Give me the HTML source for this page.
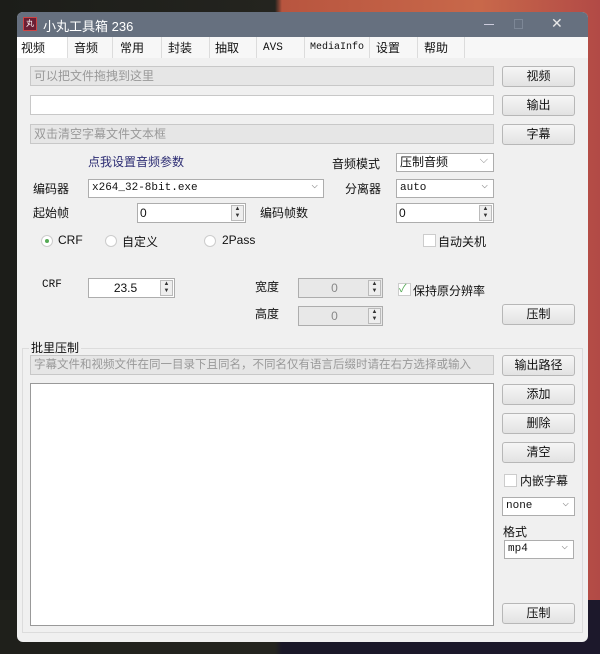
<!DOCTYPE html>
<html><head><meta charset="utf-8"><style>
*{margin:0;padding:0;box-sizing:border-box}
body{width:600px;height:654px;overflow:hidden;position:relative;font-family:"Liberation Sans","Noto Sans CJK SC",sans-serif;font-size:12px;color:#111;
background:linear-gradient(90deg,#1c1d19 0,#24241f 275px,#b8553f 282px,#c8684a 480px,#b24a46 600px)}
.bot{position:absolute;left:0;top:600px;width:600px;height:54px;background:linear-gradient(90deg,#1f201b 0,#24241f 275px,#1a1828 282px,#1c182b 600px)}
.win{position:absolute;left:17px;top:12px;width:571px;height:630px;background:#f0f0f0;border-radius:6px;overflow:hidden}
.title{position:absolute;left:0;top:0;width:571px;height:25px;background:#66707f;color:#fff;font-size:13px}
.a{position:absolute;white-space:nowrap}
.tabs{position:absolute;left:0;top:25px;width:571px;height:21px;background:#f7f7f7}
.tab{position:absolute;top:0;height:21px;border-right:1px solid #dcdcdc;font-size:12px;line-height:22px;padding-left:4px}
.in{position:absolute;border:1px solid #c8c8c8;background:#fff;height:20px;line-height:18px;padding-left:3px;color:#999;font-size:12px}
.gray{background:#e6e6e6}
.btn{position:absolute;width:73px;height:21px;border:1px solid #b7b7b7;border-radius:3px;background:linear-gradient(#f6f6f6,#e2e2e2);text-align:center;line-height:19px;font-size:12px}
.cb{position:absolute;height:19px;border:1px solid #adadad;background:#fff;font-family:"Liberation Mono",monospace;font-size:11px;line-height:17px;padding-left:3px}
.cb:after{content:"⌵";position:absolute;right:5px;top:-2px;color:#888;font-size:11px}
.sp{position:absolute;height:20px;border:1px solid #adadad;background:#fff;font-size:12px;line-height:18px;padding-left:2px}
.sp i{position:absolute;right:1px;top:1px;width:13px;height:16px;border:1px solid #bbb;background:#eee;font-style:normal;font-size:6px;line-height:7px;text-align:center;color:#333}
.dis{background:#e8e8e8;color:#888;text-align:center}
.rd{position:absolute;width:12px;height:12px;border:1px solid #ccc;border-radius:50%;background:#fff}
.ck{position:absolute;width:13px;height:13px;border:1px solid #ccc;background:#fff}
</style></head><body>
<div class="bot"></div>
<div class="win">
 <div class="title">
  <div class="a" style="left:6px;top:5px;width:14px;height:14px;background:#6b1f34;border:1px solid #c44;font-size:8px;text-align:center;line-height:12px">丸</div>
  <div class="a" style="left:26px;top:4px">小丸工具箱 236</div>
  <div class="a" style="left:467px;top:12px;width:10px;height:1px;background:#ccd"></div>
  <div class="a" style="left:497px;top:7px;width:9px;height:10px;border:1px solid #7d8796"></div>
  <div class="a" style="left:534px;top:3px;font-size:14px;color:#e8e8e8">✕</div>
 </div>
 <div class="tabs">
  <div class="tab" style="left:0;width:51px;background:#fff;border-right:1px solid #ddd">视频</div>
  <div class="tab" style="left:51px;width:45px;padding-left:6px">音频</div>
  <div class="tab" style="left:96px;width:49px;padding-left:7px">常用</div>
  <div class="tab" style="left:145px;width:48px;padding-left:6px">封装</div>
  <div class="tab" style="left:193px;width:47px;padding-left:5px">抽取</div>
  <div class="tab" style="left:240px;width:48px;padding-left:6px;font-family:'Liberation Mono';font-size:11px">AVS</div>
  <div class="tab" style="left:288px;width:65px;padding-left:5px;font-family:'Liberation Mono';font-size:10px">MediaInfo</div>
  <div class="tab" style="left:353px;width:48px;padding-left:6px">设置</div>
  <div class="tab" style="left:401px;width:47px;padding-left:6px">帮助</div>
 </div>
 <div class="in gray" style="left:13px;top:54px;width:464px">可以把文件拖拽到这里</div>
 <div class="btn" style="left:485px;top:54px">视频</div>
 <div class="in" style="left:13px;top:83px;width:464px"></div>
 <div class="btn" style="left:485px;top:83px">输出</div>
 <div class="in gray" style="left:13px;top:112px;width:464px">双击清空字幕文件文本框</div>
 <div class="btn" style="left:485px;top:112px">字幕</div>

 <div class="a" style="left:71px;top:141px;color:#2b2b72">点我设置音频参数</div>
 <div class="a" style="left:315px;top:143px">音频模式</div>
 <div class="cb" style="left:379px;top:141px;width:98px;font-family:'Liberation Sans','Noto Sans CJK SC';font-size:12px">压制音频</div>
 <div class="a" style="left:16px;top:168px">编码器</div>
 <div class="cb" style="left:71px;top:167px;width:236px">x264_32-8bit.exe</div>
 <div class="a" style="left:328px;top:168px">分离器</div>
 <div class="cb" style="left:379px;top:167px;width:98px">auto</div>
 <div class="a" style="left:16px;top:192px">起始帧</div>
 <div class="sp" style="left:120px;top:191px;width:109px">0<i>▲<br>▼</i></div>
 <div class="a" style="left:243px;top:192px">编码帧数</div>
 <div class="sp" style="left:379px;top:191px;width:98px">0<i>▲<br>▼</i></div>

 <div class="rd" style="left:24px;top:223px"><div style="margin:3px;width:4px;height:4px;border-radius:50%;background:#5a5"></div></div>
 <div class="a" style="left:41px;top:221px">CRF</div>
 <div class="rd" style="left:88px;top:223px"></div>
 <div class="a" style="left:105px;top:221px">自定义</div>
 <div class="rd" style="left:187px;top:223px"></div>
 <div class="a" style="left:205px;top:221px">2Pass</div>
 <div class="ck" style="left:406px;top:222px"></div>
 <div class="a" style="left:421px;top:221px">自动关机</div>

 <div class="a" style="left:25px;top:267px;font-family:'Liberation Mono';font-size:11px">CRF</div>
 <div class="sp" style="left:71px;top:266px;width:87px;text-align:center;padding-right:14px">23.5<i>▲<br>▼</i></div>
 <div class="a" style="left:238px;top:266px">宽度</div>
 <div class="sp dis" style="left:281px;top:266px;width:85px;padding-right:14px">0<i>▲<br>▼</i></div>
 <div class="ck" style="left:381px;top:271px;font-size:11px;line-height:11px;color:#5a5">✓</div>
 <div class="a" style="left:396px;top:270px">保持原分辨率</div>
 <div class="a" style="left:238px;top:293px">高度</div>
 <div class="sp dis" style="left:281px;top:294px;width:85px;padding-right:14px">0<i>▲<br>▼</i></div>
 <div class="btn" style="left:485px;top:292px">压制</div>

 <div class="a" style="left:5px;top:336px;width:561px;height:285px;border:1px solid #dcdcdc"></div>
 <div class="a" style="left:12px;top:327px;background:#f0f0f0;padding:0 2px">批里压制</div>
 <div class="in gray" style="left:13px;top:343px;width:464px;font-size:11.5px">字幕文件和视频文件在同一目录下且同名，不同名仅有语言后缀时请在右方选择或输入</div>
 <div class="btn" style="left:485px;top:343px">输出路径</div>
 <div class="a" style="left:13px;top:371px;width:464px;height:243px;background:#fff;border:1px solid #999"></div>
 <div class="btn" style="left:485px;top:372px">添加</div>
 <div class="btn" style="left:485px;top:401px">删除</div>
 <div class="btn" style="left:485px;top:430px">清空</div>
 <div class="ck" style="left:487px;top:462px"></div>
 <div class="a" style="left:503px;top:460px">内嵌字幕</div>
 <div class="cb" style="left:485px;top:485px;width:73px">none</div>
 <div class="a" style="left:486px;top:511px">格式</div>
 <div class="cb" style="left:487px;top:528px;width:70px">mp4</div>
 <div class="btn" style="left:485px;top:591px">压制</div>
</div>
</body></html>
